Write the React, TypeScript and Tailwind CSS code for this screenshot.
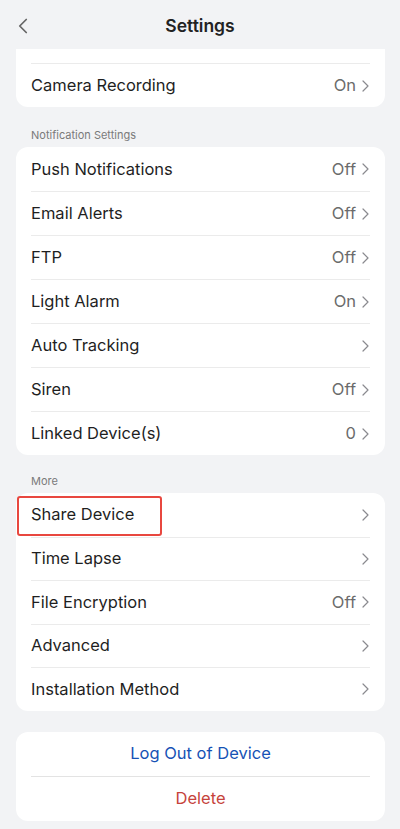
import { ChevronLeft } from "lucide-react";

type Row = { label: string; value?: string };

const notificationRows: Row[] = [
  { label: "Push Notifications", value: "Off" },
  { label: "Email Alerts", value: "Off" },
  { label: "FTP", value: "Off" },
  { label: "Light Alarm", value: "On" },
  { label: "Auto Tracking" },
  { label: "Siren", value: "Off" },
  { label: "Linked Device(s)", value: "0" },
];

const moreRows: Row[] = [
  { label: "Share Device" },
  { label: "Time Lapse" },
  { label: "File Encryption", value: "Off" },
  { label: "Advanced" },
  { label: "Installation Method" },
];

const Chevron = () => (
  <svg width="7" height="12" viewBox="0 0 7 12" fill="none" className="ml-[6px]">
    <path d="M1 1l5 5-5 5" stroke="#8a8a8f" strokeWidth="1.2" strokeLinecap="round" strokeLinejoin="round" />
  </svg>
);

const SettingRow = ({ row, first, tight }: { row: Row; first?: boolean; tight?: boolean }) => (
  <div className="px-[15px]">
    <div
      className={`flex items-center justify-between ${tight ? "h-[43.5px]" : "h-[44px]"} ${
        first ? "" : "border-t border-[#ebebeb]"
      }`}
    >
      <span className="text-[16.5px] text-[#1f1f1f]">{row.label}</span>
      <div className="flex items-center pr-[1px]">
        {row.value && <span className="text-[16.5px] text-[#6b6b6b]">{row.value}</span>}
        <Chevron />
      </div>
    </div>
  </div>
);

const SectionLabel = ({ text, top }: { text: string; top: string }) => (
  <div className={`px-[31px] pb-[4px] text-[11px] leading-[16px] text-[#7a7a7a] ${top}`}>{text}</div>
);

export default function App() {
  return (
    <div className="min-h-[829px] w-[400px] bg-[#f2f3f5] font-['Inter',sans-serif]">
      <header className="relative flex h-[49px] justify-center pt-[14px]">
        <ChevronLeft size={26} strokeWidth={1.6} className="absolute left-[10px] top-[13px] text-[#666]" />
        <h1 className="text-[17.5px] leading-[24px] font-semibold text-[#222]">Settings</h1>
      </header>

      <div className="mx-[16px] mr-[15px] rounded-b-[12px] bg-white">
        <div className="h-[14px]" />
        <SettingRow row={{ label: "Camera Recording", value: "On" }} />
      </div>

      <SectionLabel text="Notification Settings" top="pt-[20px]" />
      <div className="mx-[16px] mr-[15px] rounded-[12px] bg-white">
        {notificationRows.map((row, i) => (
          <SettingRow key={row.label} row={row} first={i === 0} />
        ))}
      </div>

      <SectionLabel text="More" top="pt-[18px]" />
      <div className="relative mx-[16px] mr-[15px] rounded-[12px] bg-white">
        {moreRows.map((row, i) => (
          <SettingRow key={row.label} row={row} first={i === 0} tight />
        ))}
        <div className="absolute left-[1px] top-[3px] h-[40px] w-[145px] rounded-[3px] border-2 border-[#e8473f]" />
      </div>

      <div className="mx-[16px] mr-[15px] mt-[21px] rounded-[12px] bg-white px-[15px]">
        <div className="flex h-[44px] items-center justify-center text-[16.5px] text-[#1652b5]">Log Out of Device</div>
        <div className="flex h-[45px] items-center justify-center border-t border-[#e3e3e3] text-[16.5px] text-[#c6433c]">
          Delete
        </div>
      </div>
    </div>
  );
}
